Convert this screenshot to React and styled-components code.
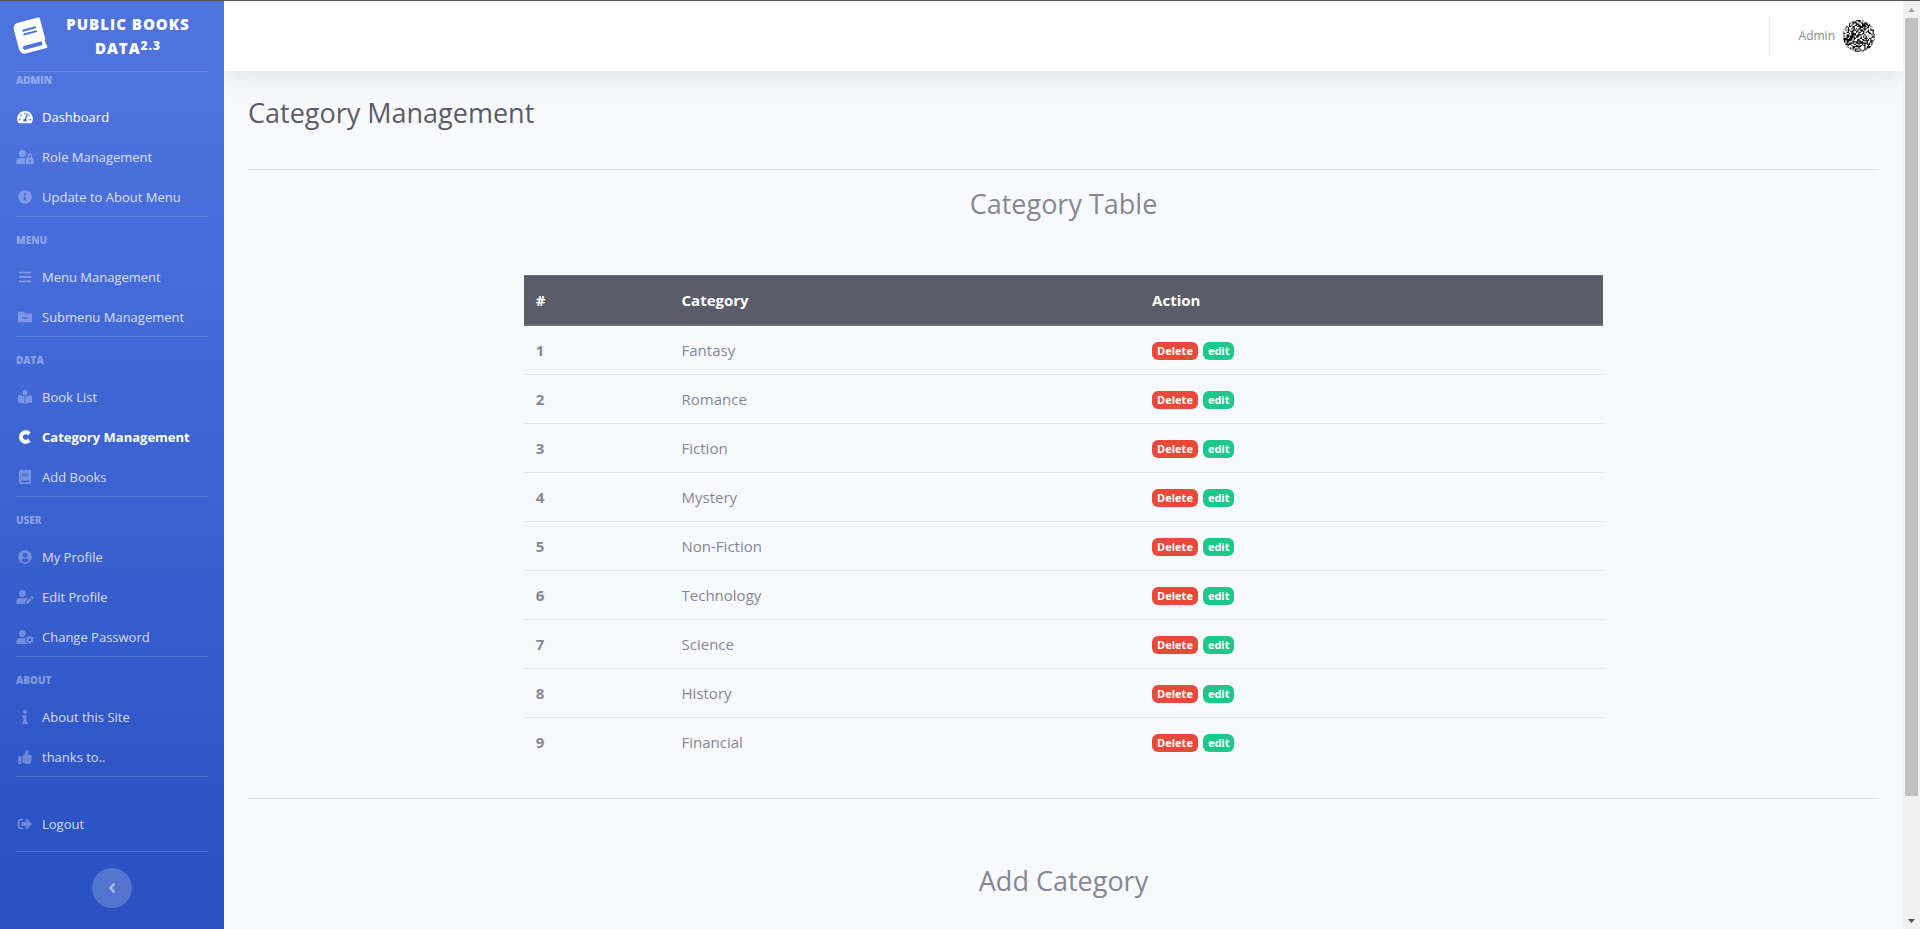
import React from 'react';
import styled, { createGlobalStyle, css } from 'styled-components';
import {
  FaBook, FaTachometerAlt, FaUserLock, FaInfoCircle, FaBars, FaFolderMinus,
  FaBookReader, FaUserCircle, FaUserEdit, FaUserCog, FaInfo, FaThumbsUp,
  FaSignOutAlt, FaAngleLeft, FaCuttlefish,
} from 'react-icons/fa';

const GlobalStyle = createGlobalStyle`
  *, *::before, *::after { box-sizing: border-box; }
  body {
    margin: 0;
    font-family: "Open Sans", "Noto Sans", sans-serif;
    font-size: 15px;
    line-height: 24px;
    color: #858796;
    background: #f8f9fc;
  }
`;

const Page = styled.div`
  display: flex;
  height: 100vh;
  overflow: hidden;
  border-top: 1px solid #55565a;
`;

const Sidebar = styled.nav`
  flex: 0 0 224px;
  background: linear-gradient(180deg, #4e73df 10%, #224abe 114%);
`;

const Brand = styled.a`
  display: flex;
  align-items: center;
  height: 70px;
  padding: 0 16px 0 12px;
  color: #fff;
  font-size: 15px;
  font-weight: 800;
  letter-spacing: 1px;
  text-align: center;
  text-transform: uppercase;
  text-decoration: none;

  svg {
    flex: none;
    width: 36px;
    height: 32px;
    transform: rotate(-15deg);
  }
`;

const BrandText = styled.span`
  flex: 1;

  sup {
    font-size: 12px;
    line-height: 0;
    vertical-align: 4px;
  }
`;

const Divider = styled.hr`
  margin: 0 16px ${(p) => (p.$flush ? 0 : 15)}px;
  border: 0;
  border-top: 1px solid rgba(255, 255, 255, 0.15);
`;

const SectionTitle = styled.h2`
  margin: 0;
  padding: 0 16px;
  color: rgba(255, 255, 255, 0.4);
  font-size: 10px;
  font-weight: 800;
  line-height: 17px;
  text-transform: uppercase;
`;

const NavList = styled.ul`
  margin: 0;
  padding: 0 0 7px;
  list-style: none;
`;

const NavLink = styled.a`
  display: flex;
  align-items: center;
  gap: 8px;
  padding: 16px 16px 0;
  color: rgba(255, 255, 255, 0.8);
  font-size: 13px;
  text-decoration: none;

  svg {
    flex: none;
    width: 18px;
    height: 14px;
    color: rgba(255, 255, 255, 0.3);
  }

  ${(p) => p.$bright && css`
    color: #fff;
    svg { color: #fff; }
  `}
  ${(p) => p.$active && css`font-weight: 700;`}
`;

const LogoutArea = styled.div`
  padding: 19px 0 15px;
`;

const Toggle = styled.button`
  display: flex;
  align-items: center;
  justify-content: center;
  width: 40px;
  height: 40px;
  margin: 16px auto;
  padding: 0;
  border: 0;
  border-radius: 50%;
  color: rgba(255, 255, 255, 0.5);
  background: rgba(255, 255, 255, 0.2);
  font-size: 16px;
`;

const Content = styled.div`
  flex: 1;
  min-width: 0;
  overflow: hidden;
`;

const Topbar = styled.header`
  display: flex;
  align-items: center;
  justify-content: flex-end;
  height: 70px;
  padding-right: 28px;
  background: #fff;
  box-shadow: 0 2px 28px rgba(58, 59, 69, 0.15);
`;

const UserLink = styled.a`
  display: flex;
  align-items: center;
  gap: 8px;
  height: 38px;
  padding-left: 29px;
  border-left: 1px solid #e3e6f0;
  color: #858796;
  font-size: 12px;
  text-decoration: none;

  svg {
    width: 32px;
    height: 32px;
    border-radius: 50%;
  }
`;

const Main = styled.main`
  padding: 25px 24px 0;
`;

const PageTitle = styled.h1`
  margin: 0 0 39px;
  color: #5a5c69;
  font-size: 27px;
  font-weight: 400;
  line-height: 34px;
`;

const Rule = styled.hr`
  margin: 0 0 ${(p) => p.$gap}px;
  border: 0;
  border-top: 1px solid #dcdde1;
`;

const SectionHeading = styled.h2`
  margin: 0;
  font-size: 27px;
  font-weight: 400;
  line-height: 34px;
  text-align: center;
`;

const Row = styled.div`
  display: flex;
  justify-content: center;
  margin: 54px -12px 32px;
`;

const Column = styled.div`
  flex: 0 0 66.6667%;
  padding: 0 12px;
`;

const Table = styled.table`
  width: 100%;
  border-spacing: 0;
  table-layout: fixed;
  text-align: left;

  th, td { padding: 12px; }

  thead th {
    color: #fff;
    background: #5a5c69;
    border-top: 1px solid #6c6e7e;
    border-bottom: 2px solid #6c6e7e;
  }
  thead th:nth-child(1) { width: 13.5%; }
  thead th:nth-child(2) { width: 43.6%; }

  tbody tr + tr > * { border-top: 1px solid #e3e6f0; }
`;

const Actions = styled.div`
  display: flex;
  align-items: center;
  gap: 5px;
  height: 24px;
  padding-top: 2px;
`;

const Badge = styled.button`
  height: 18px;
  padding: 0 5px;
  border: 0;
  border-radius: 6px;
  color: #fff;
  background: ${(p) => (p.$danger ? '#e74a3b' : '#1cc88a')};
  font-family: inherit;
  font-size: 11px;
  font-weight: 700;
  line-height: 18px;
`;

const Scrollbar = styled.div`
  flex: 0 0 17px;
  display: flex;
  flex-direction: column;
  align-items: center;
  background: #f1f1f1;

  svg { flex: none; width: 17px; height: 17px; }
`;

const Track = styled.div`
  flex: 1;
  width: 13px;
`;

const Thumb = styled.div`
  height: 87%;
  background: #c1c1c1;
`;

const sections = [
  { title: 'Admin', items: [
    { label: 'Dashboard', icon: FaTachometerAlt, bright: true },
    { label: 'Role Management', icon: FaUserLock },
    { label: 'Update to About Menu', icon: FaInfoCircle },
  ] },
  { title: 'Menu', items: [
    { label: 'Menu Management', icon: FaBars },
    { label: 'Submenu Management', icon: FaFolderMinus },
  ] },
  { title: 'Data', items: [
    { label: 'Book List', icon: FaBookReader },
    { label: 'Category Management', icon: FaCuttlefish, bright: true, active: true },
    { label: 'Add Books', icon: FaBook },
  ] },
  { title: 'User', items: [
    { label: 'My Profile', icon: FaUserCircle },
    { label: 'Edit Profile', icon: FaUserEdit },
    { label: 'Change Password', icon: FaUserCog },
  ] },
  { title: 'About', items: [
    { label: 'About this Site', icon: FaInfo },
    { label: 'thanks to..', icon: FaThumbsUp },
  ] },
];

const categories = [
  'Fantasy', 'Romance', 'Fiction', 'Mystery', 'Non-Fiction',
  'Technology', 'Science', 'History', 'Financial',
];

function Item({ label, icon: Icon, bright, active }) {
  return (
    <NavLink href="#" $bright={bright} $active={active} aria-current={active ? 'page' : undefined}>
      <Icon />
      {label}
    </NavLink>
  );
}

function Avatar() {
  const size = 27;
  let seed = 41;
  let d = '';
  for (let i = 0; i < size * size; i += 1) {
    seed = (seed * 16807) % 2147483647;
    if (seed / 2147483647 < 0.54) d += `M${i % size} ${Math.floor(i / size)}h1v1h-1z`;
  }
  return (
    <svg viewBox={`0 0 ${size} ${size}`} aria-hidden="true">
      <rect width={size} height={size} fill="#fff" />
      <path d={d} fill="#111" />
    </svg>
  );
}

export default function App() {
  return (
    <>
      <GlobalStyle />
      <Page>
        <Sidebar>
          <Brand href="#">
            <FaBook />
            <BrandText>Public Books Data<sup>2.3</sup></BrandText>
          </Brand>
          {sections.map((section, index) => (
            <React.Fragment key={section.title}>
              <Divider $flush={index === 0} />
              <SectionTitle>{section.title}</SectionTitle>
              <NavList>
                {section.items.map((item) => (
                  <li key={item.label}><Item {...item} /></li>
                ))}
              </NavList>
            </React.Fragment>
          ))}
          <Divider $flush />
          <LogoutArea>
            <Item label="Logout" icon={FaSignOutAlt} />
          </LogoutArea>
          <Divider $flush />
          <Toggle aria-label="Collapse sidebar"><FaAngleLeft /></Toggle>
        </Sidebar>
        <Content>
          <Topbar>
            <UserLink href="#">
              Admin
              <Avatar />
            </UserLink>
          </Topbar>
          <Main>
            <PageTitle>Category Management</PageTitle>
            <Rule $gap={17} />
            <SectionHeading>Category Table</SectionHeading>
            <Row>
              <Column>
                <Table>
                  <thead>
                    <tr>
                      <th scope="col">#</th>
                      <th scope="col">Category</th>
                      <th scope="col">Action</th>
                    </tr>
                  </thead>
                  <tbody>
                    {categories.map((name, i) => (
                      <tr key={name}>
                        <th scope="row">{i + 1}</th>
                        <td>{name}</td>
                        <td>
                          <Actions>
                            <Badge $danger>Delete</Badge>
                            <Badge>edit</Badge>
                          </Actions>
                        </td>
                      </tr>
                    ))}
                  </tbody>
                </Table>
              </Column>
            </Row>
            <Rule $gap={65} />
            <SectionHeading>Add Category</SectionHeading>
          </Main>
        </Content>
        <Scrollbar aria-hidden="true">
          <svg viewBox="0 0 17 17"><path d="M5 11h7L8.500 7z" fill="#a3a3a3" /></svg>
          <Track><Thumb /></Track>
          <svg viewBox="0 0 17 17"><path d="M5 7h7L8.500 11z" fill="#505050" /></svg>
        </Scrollbar>
      </Page>
    </>
  );
}
